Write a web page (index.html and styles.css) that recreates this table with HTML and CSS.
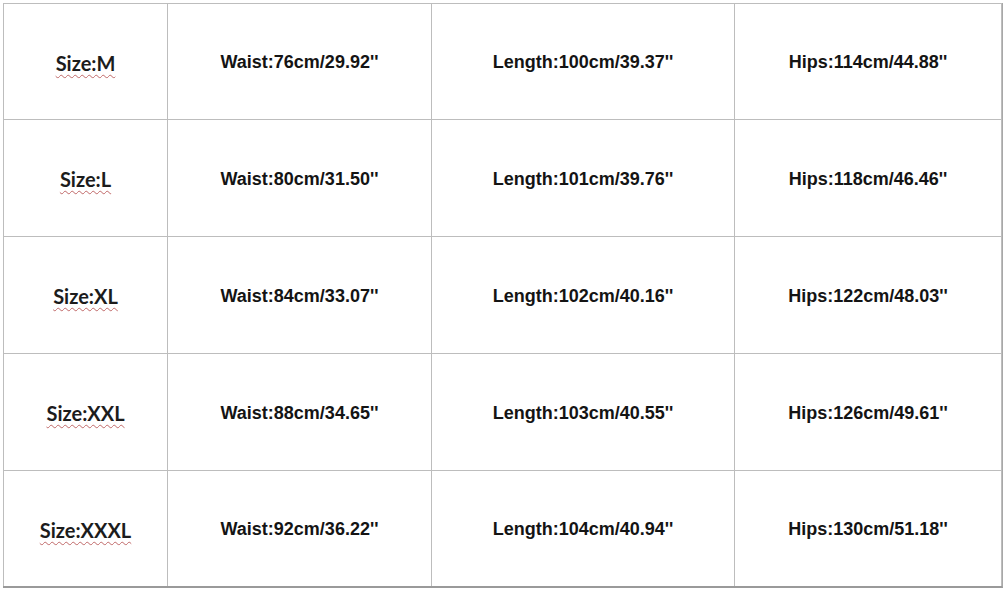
FILE: index.html
```html
<!DOCTYPE html>
<html>
<head>
<meta charset="utf-8">
<link rel="stylesheet" href="styles.css">
</head>
<body>
<div class="chart">
  <div class="cell size"><span class="sp">Size:M</span></div>
  <div class="cell">Waist:76cm/29.92''</div>
  <div class="cell">Length:100cm/39.37''</div>
  <div class="cell">Hips:114cm/44.88''</div>

  <div class="cell size"><span class="sp">Size:L</span></div>
  <div class="cell">Waist:80cm/31.50''</div>
  <div class="cell">Length:101cm/39.76''</div>
  <div class="cell">Hips:118cm/46.46''</div>

  <div class="cell size"><span class="sp">Size:XL</span></div>
  <div class="cell">Waist:84cm/33.07''</div>
  <div class="cell">Length:102cm/40.16''</div>
  <div class="cell">Hips:122cm/48.03''</div>

  <div class="cell size"><span class="sp">Size:XXL</span></div>
  <div class="cell">Waist:88cm/34.65''</div>
  <div class="cell">Length:103cm/40.55''</div>
  <div class="cell">Hips:126cm/49.61''</div>

  <div class="cell size"><span class="sp">Size:XXXL</span></div>
  <div class="cell">Waist:92cm/36.22''</div>
  <div class="cell">Length:104cm/40.94''</div>
  <div class="cell">Hips:130cm/51.18''</div>
</div>
</body>
</html>
```

FILE: styles.css
```css
html, body {
  margin: 0;
  padding: 0;
  background: #ffffff;
}

body {
  padding: 3px 0 0 3px;
}

.chart {
  display: grid;
  grid-template-columns: 163px 263px 302px 266px;
  grid-template-rows: 115px 116px 116px 116px 115px;
  gap: 1px;
  padding: 1px 1px 0 1px;
  width: max-content;
  background: #bdbdbd;
  border-bottom: 2px solid #9a9a9a;
  border-right: 1px solid #a8a8a8;
}

.cell {
  background: #ffffff;
  display: flex;
  align-items: center;
  justify-content: center;
  padding-top: 2px;
  font-family: "Liberation Sans", Arial, sans-serif;
  font-weight: bold;
  font-size: 18px;
  color: #141414;
}

.size {
  font-family: Lato, "Liberation Sans", sans-serif;
  font-size: 20px;
  color: #1c1c1c;
}

.sp {
  text-decoration: underline wavy #c06868;
  text-decoration-thickness: 1px;
  text-underline-offset: 3px;
}
```
